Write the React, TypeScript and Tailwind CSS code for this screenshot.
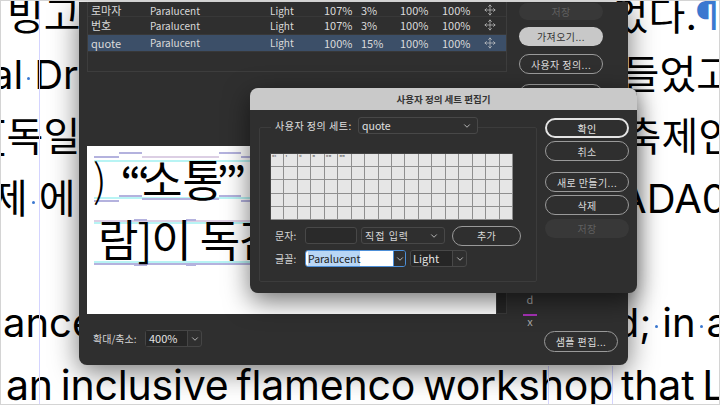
import { Move, ChevronDown } from "lucide-react";

const KR = "font-['Noto_Sans_CJK_KR','Noto_Sans',sans-serif]";
const DISPLAY = "font-['Inter','Noto_Sans_CJK_KR',sans-serif]";

const rows = [
  { name: "로마자", font: "Paralucent", style: "Light", size: "107%", base: "3%", h: "100%", v: "100%" },
  { name: "번호", font: "Paralucent", style: "Light", size: "107%", base: "3%", h: "100%", v: "100%" },
  { name: "quote", font: "Paralucent", style: "Light", size: "100%", base: "15%", h: "100%", v: "100%" },
];

const glyphs = ["“‘", "’", "“", "”", "“”", "””"];

function Dot() {
  return <span className="inline-block w-[3px] h-[3px] mx-[4px] align-middle bg-[#3b78d0] rounded-full" />;
}

function PageLine({ left, right, className = "h-[62px]" }: { left: React.ReactNode; right: React.ReactNode; className?: string }) {
  return (
    <div className={`flex justify-between items-center whitespace-nowrap overflow-hidden text-[40px] leading-none text-black ${className}`}>
      <div>{left}</div>
      <div>{right}</div>
    </div>
  );
}

function PillButton({ label, variant = "outline", className = "" }: { label: string; variant?: "outline" | "disabled" | "light" | "default"; className?: string }) {
  const styles = {
    outline: "border border-[#9a9a9a] text-[#dcdcdc]",
    disabled: "bg-[#383838] text-[#606060]",
    light: "bg-[#c8c8c8] text-[#333]",
    default: "border-2 border-[#e4e4e4] text-[#e4e4e4]",
  };
  return (
    <div className={`flex items-center justify-center rounded-full text-[10px] tracking-[0.4px] ${styles[variant]} ${className}`}>{label}</div>
  );
}

function GuideDash({ className }: { className: string }) {
  return <div className={`absolute h-[2px] ${className}`} />;
}

export default function App() {
  return (
    <div className={`relative w-[720px] h-[405px] overflow-hidden bg-white border border-[#d4d4d4] ${DISPLAY}`}>
      {/* document behind the dialogs */}
      <div className="-mt-[14px]">
        <PageLine className="h-[57px]" left={<span className="pl-[6px]">빙고</span>} right={<span>었다.<span className="text-[#3b78d0]">¶</span></span>} />
        <PageLine left={<span className="-ml-[10px] inline-block">al<Dot />Dre</span>} right={<span className="-mr-[14px] inline-block">들었고</span>} />
        <PageLine left={<span className="-ml-[9px] inline-block">[독일</span>} right={<span className="-mr-[16px] inline-block">축제인</span>} />
        <PageLine left={<span className="-ml-[10px] inline-block">제<Dot />에</span>} right={<span className="-mr-[8px] inline-block">ADA0</span>} />
        <PageLine left="" right="" />
        <PageLine left={<span className="pl-[2px]">ance</span>} right={<span className="-mr-[10px] inline-block">d;<Dot />in<Dot />a</span>} />
        <div className="h-[62px] pl-[5px] flex items-center whitespace-nowrap text-[41px] leading-none tracking-[-0.2px] text-black">
          an<Dot />inclusive<Dot />flamenco<Dot />workshop<Dot />that<Dot />L
        </div>
      </div>
      <div className="absolute left-[38px] top-0 bottom-0 w-[1px] bg-[#d4d4ff]" />
      <div className="absolute left-[547px] top-[365px] bottom-0 w-[1px] bg-[#d4d4ff]" />
      <div className="absolute left-[611px] top-[365px] bottom-0 w-[1px] bg-[#d4d4ff]" />

      {/* 글꼴 대체 dialog */}
      <div className={`absolute left-[78px] top-[1px] w-[549px] h-[363px] bg-[#2f2f2f] rounded-b-lg shadow-[0_6px_28px_rgba(0,0,0,0.55)] ${KR}`}>
        <div className="flex">
          <div className="w-[428px] pl-[8px]">
            <div className="h-[70px] border-x border-b border-[#3d3d3d] text-[11px] text-[#dadada]">
              {rows.map((r, i) => (
                <div
                  key={r.name}
                  className={`grid grid-cols-[59px_120px_54px_37px_39px_42px_42px_1fr] pl-[3px] items-center border-b border-[#383838] ${i === 0 ? "h-[15px]" : "h-[17.5px]"} ${r.name === "quote" ? "bg-[#3c4f68]" : ""}`}
                >
                  <div>{r.name}</div>
                  <div className="text-[10px]">{r.font}</div>
                  <div className="text-[10px]">{r.style}</div>
                  <div>{r.size}</div>
                  <div>{r.base}</div>
                  <div>{r.h}</div>
                  <div>{r.v}</div>
                  <Move size={12} strokeWidth={1.3} className="text-[#cfcfcf]" />
                </div>
              ))}
            </div>

            <div className="flex mt-[74px] h-[168px]">
              <div className="relative w-[409px] h-full bg-white overflow-hidden">
                <GuideDash className="left-[7px] right-0 top-[14px] bg-[#b8f4f4]" />
                <GuideDash className="left-[7px] w-[25px] top-[10px] bg-[#b4b2de]" />
                <GuideDash className="left-[32px] w-[23px] top-[6px] bg-[#b4b2de]" />
                <GuideDash className="left-[55px] w-[77px] top-[10px] bg-[#dccfe4]" />
                <GuideDash className="left-[132px] w-[22px] top-[6px] bg-[#b4b2de]" />
                <GuideDash className="left-[154px] right-0 top-[10px] bg-[#b4b2de]" />
                <GuideDash className="left-[7px] right-0 top-[51px] h-[1px] bg-[#b8f4f4]" />
                <GuideDash className="left-[32px] w-[23px] top-[49px] bg-[#b4b2de]" />
                <GuideDash className="left-[7px] w-[25px] top-[54px] bg-[#b4b2de]" />
                <GuideDash className="left-[55px] w-[77px] top-[52px] bg-[#b4b2de]" />
                <GuideDash className="left-[132px] w-[22px] top-[49px] bg-[#b4b2de]" />
                <GuideDash className="left-[154px] right-0 top-[54px] bg-[#b4b2de]" />
                <GuideDash className="left-[7px] right-0 top-[76px] bg-[#b8f4f4]" />
                <GuideDash className="left-[7px] right-0 top-[74px] bg-[#dccfe4]" />
                <GuideDash className="left-[47px] w-[13px] top-[73px] bg-[#b4b2de]" />
                <GuideDash className="left-[99px] w-[10px] top-[73px] bg-[#b4b2de]" />
                <GuideDash className="left-[7px] right-0 top-[115px] bg-[#b8f4f4]" />
                <GuideDash className="left-[7px] right-0 top-[117px] bg-[#b4b2de]" />
                <GuideDash className="left-[47px] w-[13px] top-[118px] bg-[#b4b2de]" />
                <GuideDash className="left-[99px] w-[10px] top-[118px] bg-[#b4b2de]" />
                <div className="relative flex items-start pl-[6px] pt-[7px] h-[58px] text-[44px] leading-[50px] text-black whitespace-nowrap">
                  <span className="w-[28px] font-light">)</span>
                  <span className="w-[21px] text-[34px] font-bold tracking-[-2px]">“‘</span>
                  <span>소통</span>
                  <span className="-ml-[6px] text-[34px] font-bold tracking-[-2px]">’”</span>
                </div>
                <div className="relative text-[44px] leading-[50px] pt-[9px] pl-[11px] tracking-[-1px] text-black whitespace-nowrap">
                  람]이 독감
                </div>
              </div>
              <div className="w-[11px] h-full bg-[#262626] border border-t-0 border-[#3a3a3a]" />
            </div>

            <div className="flex items-center mt-[16px] pl-[6px] text-[10px] text-[#d6d6d6]">
              <span className="w-[52px]">확대/축소:</span>
              <div className="flex h-[17px] w-[57px] border border-[#454545] rounded-[3px]">
                <div className="flex-1 bg-[#262626] pl-[3px] text-[11px] leading-[15px] text-[#e2e2e2]">400%</div>
                <div className="w-[14px] flex items-center justify-center border-l border-[#454545]">
                  <ChevronDown size={10} className="text-[#cfcfcf]" />
                </div>
              </div>
            </div>
          </div>

          <div className="ml-[12px] w-[84px] pt-[1px] flex flex-col">
            <PillButton label="저장" variant="disabled" className="h-[17px]" />
            <PillButton label="가져오기..." variant="light" className="h-[19px] mt-[7px]" />
            <PillButton label="사용자 정의..." className="h-[20px] mt-[8px]" />
            <PillButton label="" className="h-[20px] mt-[10px]" />
            <div className="mt-[188px] ml-[4px] w-[14px] text-center text-[11px] leading-[10px] text-[#a8a8a8]">
              <div className="border-t border-[#5c6a2e] pt-[1px]">d</div>
              <div className="mt-[10px] border-t-2 border-[#a832b8] leading-[8px] pt-[1px]">x</div>
            </div>
          </div>
        </div>
        <PillButton label="샘플 편집..." className="absolute left-[465px] top-[329px] w-[74px] h-[21px]" />
      </div>

      {/* 사용자 정의 세트 편집기 */}
      <div className={`absolute left-[249px] top-[87px] w-[387px] h-[205px] rounded-lg bg-[#2f2f2f] overflow-hidden shadow-[0_8px_26px_rgba(0,0,0,0.55)] ${KR}`}>
        <div className="h-[22px] bg-[#c9c9c9] flex items-center justify-center text-[9.5px] font-bold text-[#333]">
          사용자 정의 세트 편집기
        </div>
        <div className="flex pl-[9px] pt-[17px]">
          <div className="w-[278px] h-[155px] border border-[#3c3c3c] rounded-[2px] pl-[11px]">
            <div className="flex items-center -mt-[11px] text-[10px] text-[#e0e0e0]">
              <span className="bg-[#2f2f2f] pl-[4px] w-[87px] tracking-[0.5px] whitespace-nowrap">사용자 정의 세트:</span>
              <div className="flex items-center justify-between w-[120px] h-[17px] bg-[#2f2f2f] border border-[#484848] rounded-[3px] pl-[3px] pr-[5px] text-[10.5px]">
                quote
                <ChevronDown size={10} className="text-[#cfcfcf]" />
              </div>
            </div>
            <div className="mt-[19px] -ml-[1px] w-[243px] h-[67px] grid grid-cols-[repeat(18,1fr)] grid-rows-5 bg-[#e6e6e6] border-t border-l border-[#444]">
              {Array.from({ length: 90 }, (_, i) => (
                <div key={i} className="border-r border-b border-[#8f8f8f] text-[6px] leading-[8px] pl-[1px] text-[#111] overflow-hidden">
                  {glyphs[i] ?? ""}
                </div>
              ))}
            </div>
            <div className="flex items-center mt-[7px] h-[17px] text-[10px] text-[#d6d6d6]">
              <span className="w-[34px] pl-[4px]">문자:</span>
              <div className="w-[52px] h-[17px] bg-[#2a2a2a] border border-[#484848] rounded-[3px]" />
              <div className="ml-[4px] w-[84px] h-[17px] flex items-center justify-between border border-[#484848] rounded-[3px] pl-[3px] pr-[5px] tracking-[1px]">
                직접 입력
                <ChevronDown size={10} className="text-[#cfcfcf]" />
              </div>
              <PillButton label="추가" className="ml-[7px] w-[69px] h-[20px]" />
            </div>
            <div className="flex items-center mt-[6px] h-[17px] text-[10px] text-[#d6d6d6]">
              <span className="w-[34px] pl-[4px]">글꼴:</span>
              <div className="flex w-[101px] h-[17px] border border-[#4d8fd8] rounded-[3px] overflow-hidden">
                <div className="w-[87px] bg-white pl-[2px] text-[10.5px] leading-[15px] text-[#222]">
                  <span className="bg-[#b9d6f5]">Paralucent</span>
                </div>
                <div className="flex-1 flex items-center justify-center bg-[#2f2f2f] border-l border-[#4d8fd8]">
                  <ChevronDown size={10} className="text-[#cfcfcf]" />
                </div>
              </div>
              <div className="flex ml-[4px] w-[57px] h-[17px] border border-[#484848] rounded-[3px] overflow-hidden">
                <div className="flex-1 bg-[#262626] pl-[2px] text-[11px] leading-[15px] text-[#e2e2e2]">Light</div>
                <div className="w-[14px] flex items-center justify-center border-l border-[#484848]">
                  <ChevronDown size={10} className="text-[#cfcfcf]" />
                </div>
              </div>
            </div>
          </div>
          <div className="ml-[8px] w-[84px] -mt-[9px] flex flex-col">
            <PillButton label="확인" variant="default" className="h-[20px]" />
            <PillButton label="취소" className="h-[20px] mt-[3px]" />
            <PillButton label="새로 만들기..." className="h-[20px] mt-[11px]" />
            <PillButton label="삭제" className="h-[20px] mt-[3px]" />
            <PillButton label="저장" variant="disabled" className="h-[19px] mt-[4px]" />
          </div>
        </div>
      </div>
    </div>
  );
}
